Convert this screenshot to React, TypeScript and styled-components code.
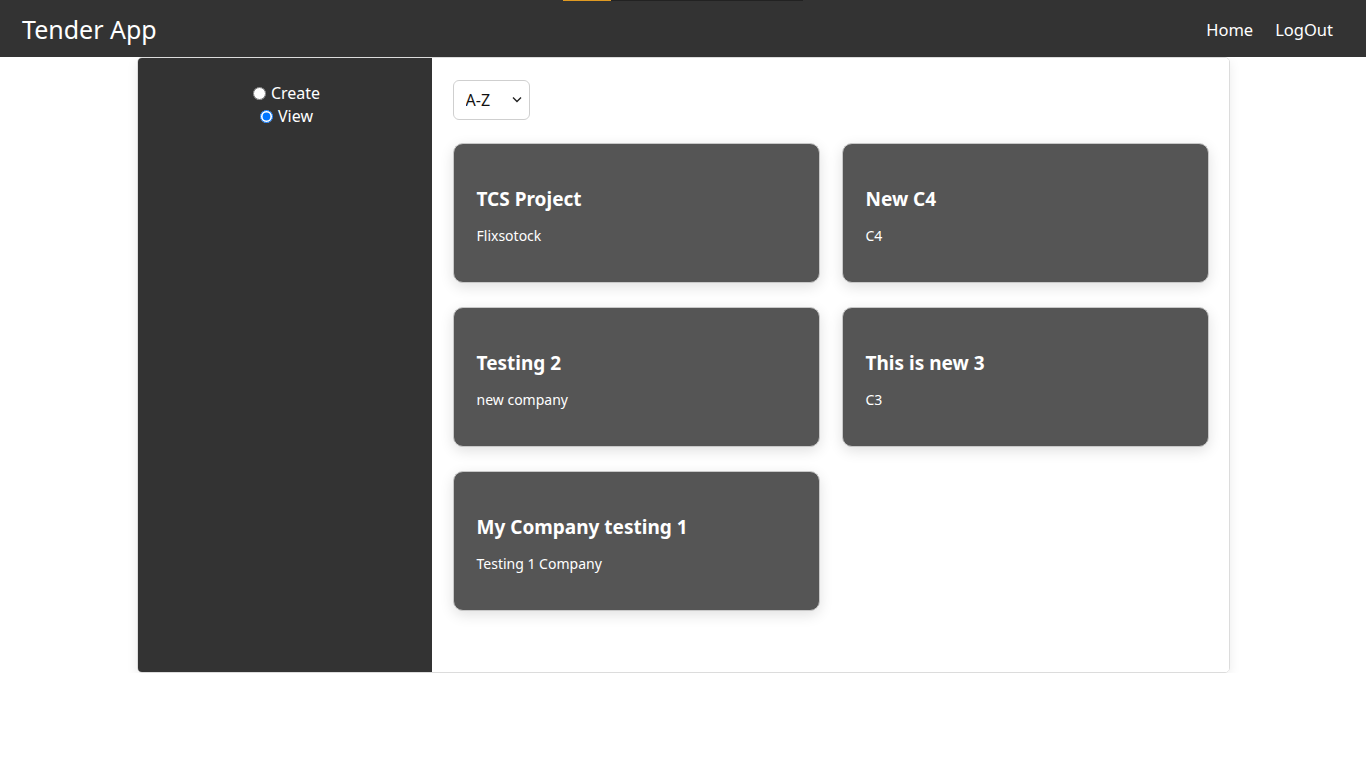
import React from "react";
import styled, { createGlobalStyle } from "styled-components";

const Global = createGlobalStyle`
  html, body { margin: 0; padding: 0; background: #fff; }
  body { font-family: "Segoe UI", "Noto Sans", "Open Sans", sans-serif; }
  * { box-sizing: border-box; }
`;

const Nav = styled.nav`
  position: relative;
  height: 57px;
  background: #333333;
  display: flex;
  align-items: center;
  justify-content: space-between;
  padding: 0 22px 0 22px;
`;

const Progress = styled.div`
  position: absolute;
  top: 0;
  left: 563px;
  width: 240px;
  height: 1px;
  background: #222;
  display: flex;
`;

const ProgressFill = styled.div`
  width: 48px;
  height: 100%;
  background: #e09a22;
`;

const Brand = styled.div`
  color: #fff;
  font-size: 25px;
  line-height: 1;
  margin-top: 1px;
`;

const Links = styled.div`
  display: flex;
  align-items: center;
`;

const NavLink = styled.a`
  color: #fff;
  font-size: 16.5px;
  padding: 0 11px;
  text-decoration: none;
  margin-top: 1px;
`;

const Shell = styled.div`
  width: 1093px;
  margin: 0 auto;
  height: 616px;
  border: 1px solid #dcdcdc;
  border-radius: 5px;
  box-shadow: 0 4px 12px rgba(0, 0, 0, 0.08);
  display: flex;
  overflow: hidden;
`;

const Sidebar = styled.aside`
  width: 294px;
  background: #333333;
  display: flex;
  flex-direction: column;
  align-items: center;
  padding: 24px 0 0 4px;
`;

const RadioRow = styled.label`
  display: flex;
  align-items: center;
  color: #fff;
  font-size: 16px;
  line-height: 23px;
  input {
    margin: 0 5px 0 0;
    width: 13px;
    height: 13px;
  }
`;

const Main = styled.main`
  flex: 1;
  padding: 22px 20px 0 21px;
  background: #fff;
`;

const SelectWrap = styled.div`
  position: relative;
  width: 77px;
  height: 40px;
`;

const Select = styled.select`
  display: block;
  appearance: none;
  width: 77px;
  height: 40px;
  border: 1px solid #cfcfcf;
  border-radius: 6px;
  background: #fff;
  font-family: inherit;
  font-size: 16px;
  color: #111;
  padding: 0 8px 0 12px;
`;

const Chevron = styled.svg`
  position: absolute;
  right: 8px;
  top: 16px;
  width: 10px;
  height: 7px;
  pointer-events: none;
`;

const Grid = styled.div`
  margin-top: 23px;
  display: grid;
  grid-template-columns: 1fr 1fr;
  column-gap: 22px;
  row-gap: 24px;
`;

const Card = styled.div`
  height: 140px;
  background: #555555;
  border: 1px solid #c8c8c8;
  border-radius: 10px;
  box-shadow: 0 4px 14px rgba(0, 0, 0, 0.12);
  padding: 42px 23px 0;
  color: #fff;
`;

const Title = styled.h3`
  margin: 0;
  font-size: 19px;
  font-weight: 700;
  line-height: 26px;
`;

const Sub = styled.p`
  margin: 14px 0 0;
  font-size: 14px;
  line-height: 20px;
`;

const tenders = [
  { t: "TCS Project", s: "Flixsotock" },
  { t: "New C4", s: "C4" },
  { t: "Testing 2", s: "new company" },
  { t: "This is new 3", s: "C3" },
  { t: "My Company testing 1", s: "Testing 1 Company" },
];

export default function App() {
  return (
    <>
      <Global />
      <Nav>
        <Progress>
          <ProgressFill />
        </Progress>
        <Brand>Tender App</Brand>
        <Links>
          <NavLink href="#">Home</NavLink>
          <NavLink href="#">LogOut</NavLink>
        </Links>
      </Nav>
      <Shell>
        <Sidebar>
          <RadioRow>
            <input type="radio" name="mode" />
            Create
          </RadioRow>
          <RadioRow>
            <input type="radio" name="mode" defaultChecked />
            View
          </RadioRow>
        </Sidebar>
        <Main>
          <SelectWrap>
            <Select defaultValue="az">
              <option value="az">A-Z</option>
              <option value="za">Z-A</option>
            </Select>
            <Chevron viewBox="0 0 10 7">
              <path d="M1 1.5 L5 5.5 L9 1.5" fill="none" stroke="#222" strokeWidth="1.4" />
            </Chevron>
          </SelectWrap>
          <Grid>
            {tenders.map((x) => (
              <Card key={x.t}>
                <Title>{x.t}</Title>
                <Sub>{x.s}</Sub>
              </Card>
            ))}
          </Grid>
        </Main>
      </Shell>
    </>
  );
}
